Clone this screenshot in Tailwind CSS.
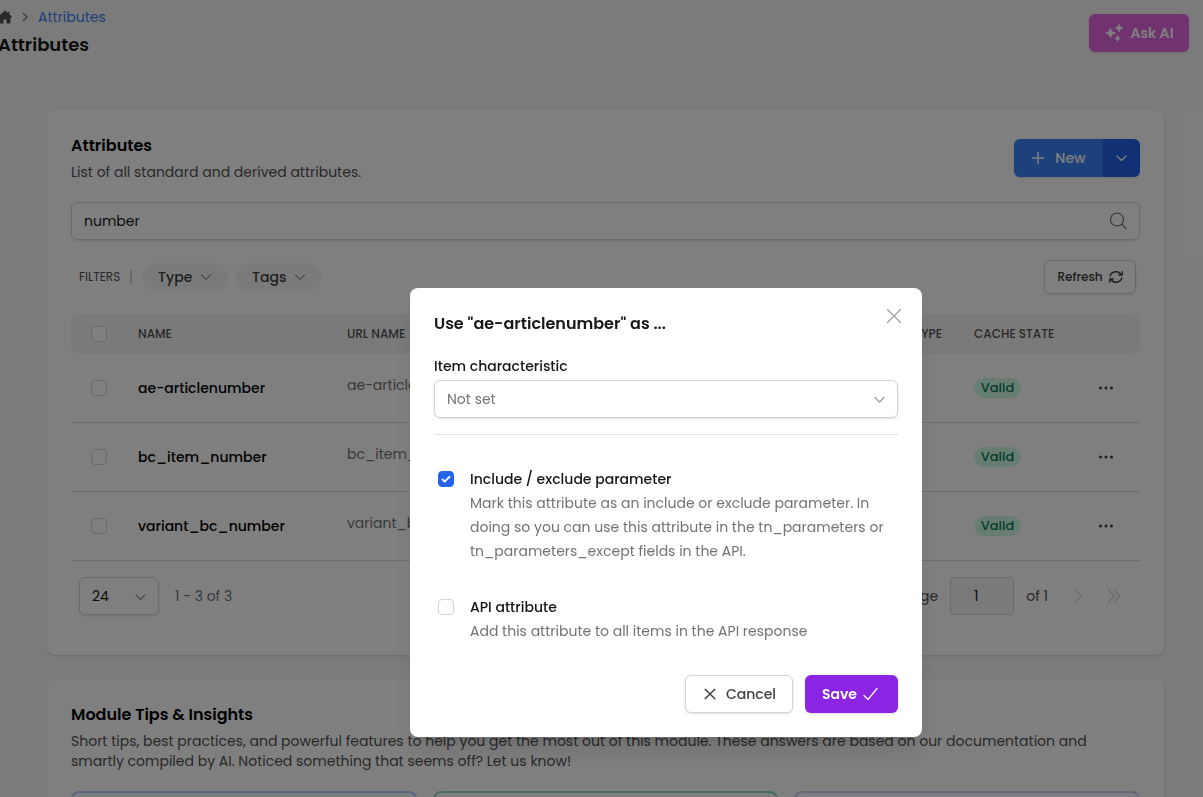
<!DOCTYPE html>
<html lang="en">
<head>
    <meta charset="UTF-8">
    <meta name="viewport" content="width=device-width, initial-scale=1.0">
    <title>Attributes</title>
    <script src="https://cdn.jsdelivr.net/npm/@tailwindcss/browser@4"></script>
</head>
<body class="bg-[#f6f6f6] font-['Poppins','Inter',sans-serif] text-sm text-neutral-900">
    <div class="h-screen overflow-hidden">
        <!-- Page header -->
        <header class="flex items-start justify-between pr-3.5">
            <div class="pt-[7px]">
                <nav class="flex items-center gap-1.5 leading-5">
                    <a href="#" aria-label="Home" class="-ml-0.5 text-neutral-600">
                        <svg class="size-3.5" viewBox="0 0 14 14" fill="currentColor"><path d="M7 .5.3 6.500c-.4.400-.1 1 .4 1H1.500V12.600c0 .5.3.8.8.8H5.500V9.500h3v3.900h3.200c.5 0 .8-.3.8-.8V7.500h.8c.5 0 .8-.6.400-1L11.500 4.500V1.700H9.700v1.200z"/></svg>
                    </a>
                    <svg class="mx-0.5 size-2.5 text-neutral-500" viewBox="0 0 10 10" fill="none" stroke="currentColor" stroke-width="1.300"><path d="m3 1 4 4-4 4"/></svg>
                    <a href="#" class="text-[#3b82f6]">Attributes</a>
                </nav>
                <h1 class="-ml-0.5 mt-1 text-lg leading-7 font-semibold">Attributes</h1>
            </div>
            <button class="mt-3.5 flex h-[38px] w-[100px] items-center justify-center gap-1.5 rounded-md bg-[#e066e0] font-semibold text-white shadow">
                <svg class="size-5" viewBox="0 0 20 20" fill="currentColor"><path d="M6.500 5c.8 3.200 1.800 4.200 5 5-3.200.8-4.200 1.800-5 5-.8-3.200-1.800-4.200-5-5 3.200-.8 4.200-1.800 5-5zM15 1c.6 2.600 1.400 3.400 4 4-2.600.6-3.400 1.400-4 4-.6-2.600-1.400-3.400-4-4 2.600-.6 3.400-1.400 4-4zM13.500 12.500c.4 1.900 1.100 2.600 3 3-1.900.4-2.600 1.100-3 3-.4-1.900-1.100-2.600-3-3 1.900-.4 2.600-1.100 3-3z" stroke="currentColor" stroke-width=".8" stroke-linejoin="round"/></svg>
                Ask AI
            </button>
        </header>

        <div class="mt-[51px] flex items-start gap-5 pl-[47px]">
            <main class="min-w-0 flex-1 space-y-6">
                <!-- Attribute list -->
                <section class="rounded-lg bg-white px-6 pt-6 pb-10 shadow-sm">
                    <div class="flex items-center justify-between">
                        <div>
                            <h2 class="text-base leading-6 font-semibold text-black">Attributes</h2>
                            <p class="mt-1 leading-5 text-neutral-600">List of all standard and derived attributes.</p>
                        </div>
                        <div class="flex h-[38px] rounded-md shadow">
                            <button class="flex w-[89px] items-center justify-center gap-2.5 rounded-l-md bg-[#3b82f6] font-medium text-white">
                                <svg class="size-3.5" viewBox="0 0 14 14" fill="none" stroke="currentColor" stroke-width="1.500"><path d="M7 1v12M1 7h12"/></svg>
                                New
                            </button>
                            <button aria-label="More options" class="flex w-[37px] items-center justify-center rounded-r-md bg-[#2563eb] text-white">
                                <svg class="size-3" viewBox="0 0 12 12" fill="none" stroke="currentColor" stroke-width="1.300" stroke-linecap="round" stroke-linejoin="round"><path d="m1 4 4.500 4.500L10 4"/></svg>
                            </button>
                        </div>
                    </div>

                    <div class="relative mt-5">
                        <input type="text" value="number" aria-label="Search attributes" class="block h-[38px] w-full rounded-md border border-neutral-300 pr-10 pl-3 text-neutral-900 shadow-sm outline-none">
                        <svg class="absolute top-2.5 right-3 size-[18px] text-neutral-500" viewBox="0 0 18 18" fill="none" stroke="currentColor" stroke-width="1.200" stroke-linecap="round"><circle cx="7" cy="7.500" r="6.500"/><path d="m11.800 12.300 4.200 4.200"/></svg>
                    </div>

                    <!-- Filters -->
                    <div class="mt-5 flex items-center pr-1 pl-2">
                        <span class="text-xs text-neutral-600">FILTERS</span>
                        <span class="mx-2.5 h-3.5 w-0.5 bg-neutral-300"></span>
                        <button class="flex h-7 w-[86px] items-center justify-center gap-2 rounded-full bg-neutral-100 font-medium text-neutral-700">
                            Type
                            <svg class="size-3 text-neutral-400" viewBox="0 0 12 12" fill="none" stroke="currentColor" stroke-width="1.300" stroke-linecap="round" stroke-linejoin="round"><path d="m1.500 4 4.500 4.500L10.500 4"/></svg>
                        </button>
                        <button class="ml-2 flex h-7 w-[86px] items-center justify-center gap-2 rounded-full bg-neutral-100 font-medium text-neutral-700">
                            Tags
                            <svg class="size-3 text-neutral-400" viewBox="0 0 12 12" fill="none" stroke="currentColor" stroke-width="1.300" stroke-linecap="round" stroke-linejoin="round"><path d="m1.500 4 4.500 4.500L10.500 4"/></svg>
                        </button>
                        <button class="ml-auto flex h-[34px] w-[92px] items-center justify-center gap-1.5 rounded-md border border-neutral-300 text-xs font-medium text-neutral-700 shadow-sm">
                            Refresh
                            <svg class="size-3.5" viewBox="0 0 14 14" fill="none" stroke="currentColor" stroke-width="1.400" stroke-linecap="round" stroke-linejoin="round"><path d="M1.200 6A6 6 0 0 1 12 4.500M13.200 1.700v3.300H9.900M12.800 8A6 6 0 0 1 2 9.500M.8 12.300V9h3.300"/></svg>
                        </button>
                    </div>

                    <table class="mt-5 w-full table-fixed border-separate border-spacing-0 text-left">
                        <colgroup>
                            <col class="w-[51px]">
                            <col class="w-[209px]">
                            <col>
                            <col class="w-[103px]">
                            <col class="w-[116px]">
                            <col class="w-[66px]">
                        </colgroup>
                        <thead>
                            <tr class="h-10 text-xs text-neutral-600 [&>th]:bg-neutral-100 [&>th]:font-medium">
                                <th class="rounded-l-lg pl-5"><input type="checkbox" aria-label="Select all" class="block size-4 appearance-none rounded border border-neutral-300 bg-white"></th>
                                <th class="px-4">NAME</th>
                                <th class="px-4">URL NAME</th>
                                <th class="px-4 text-right whitespace-nowrap">DATA TYPE</th>
                                <th class="px-4 whitespace-nowrap">CACHE STATE</th>
                                <th class="rounded-r-lg"></th>
                            </tr>
                        </thead>
                        <tbody id="rows"></tbody>
                    </table>

                    <!-- Pagination -->
                    <div class="mt-4 flex items-center pr-4 pl-2 text-neutral-600">
                        <div class="relative">
                            <select aria-label="Rows per page" class="block h-[38px] w-20 appearance-none rounded-md border border-neutral-300 bg-white px-3 text-neutral-900 shadow-sm">
                                <option>24</option>
                                <option>48</option>
                            </select>
                            <svg class="pointer-events-none absolute top-3.5 right-3 size-3 text-neutral-400" viewBox="0 0 12 12" fill="none" stroke="currentColor" stroke-width="1.300" stroke-linecap="round" stroke-linejoin="round"><path d="m1 4 4.500 4.500L10 4"/></svg>
                        </div>
                        <span class="ml-4 text-neutral-500">1 - 3 of 3</span>
                        <label for="page" class="ml-auto">Page</label>
                        <input id="page" type="text" value="1" class="mx-3 h-[38px] w-16 rounded border border-neutral-300 bg-neutral-100 pr-3 text-center text-neutral-900">
                        <span class="whitespace-nowrap">of 1</span>
                        <button aria-label="Next page" class="ml-5 flex w-5 justify-center text-neutral-300">
                            <svg class="size-4" viewBox="0 0 16 16" fill="none" stroke="currentColor" stroke-width="1.200"><path d="m4.500 1.500 7 6.500-7 6.500"/></svg>
                        </button>
                        <button aria-label="Last page" class="ml-4 flex w-5 justify-center text-neutral-300">
                            <svg class="size-4" viewBox="0 0 16 16" fill="none" stroke="currentColor" stroke-width="1.200"><path d="m2 1.500 6.500 6.500L2 14.500M7.500 1.500 14 8l-6.500 6.500"/></svg>
                        </button>
                    </div>
                </section>

                <!-- Tips -->
                <section class="rounded-lg bg-white p-6 shadow-sm">
                    <h2 class="text-base leading-6 font-semibold text-black">Module Tips &amp; Insights</h2>
                    <p class="mt-1 max-w-5xl leading-5 text-neutral-600">Short tips, best practices, and powerful features to help you get the most out of this module. These answers are based on our documentation and smartly compiled by AI. Noticed something that seems off? Let us know!</p>
                    <div class="mt-5 grid grid-cols-3 gap-4">
                        <div class="h-40 rounded-lg border-2 border-[#b4cdf8] bg-[#f7faff]"></div>
                        <div class="h-40 rounded-lg border-2 border-[#94dcbc] bg-[#f9fffc]"></div>
                        <div class="h-40 rounded-lg border-2 border-[#d9ccf3] bg-[#fcfaff]"></div>
                    </div>
                </section>
            </main>
            <aside class="h-[152px] w-[19px] rounded-l-lg bg-[#fbfbfb]"></aside>
        </div>
    </div>

    <!-- Modal -->
    <div class="fixed inset-0 flex items-start justify-center bg-black/50 pt-72 pl-[129px]">
        <form role="dialog" aria-labelledby="modal-title" class="relative w-full max-w-lg rounded-lg bg-white p-6 shadow-xl">
            <h3 id="modal-title" class="text-base leading-6 font-semibold">Use "ae-articlenumber" as ...</h3>
            <button type="button" aria-label="Close" class="absolute top-5 right-5 text-neutral-400">
                <svg class="size-4" viewBox="0 0 16 16" fill="none" stroke="currentColor" stroke-width="1.400" stroke-linecap="round"><path d="m1.500 1.500 13 13M14.500 1.500l-13 13"/></svg>
            </button>

            <label for="characteristic" class="mt-5 block leading-5 font-medium">Item characteristic</label>
            <div class="relative mt-1">
                <select id="characteristic" class="block h-[38px] w-full appearance-none rounded-md border border-neutral-300 bg-white px-3 text-neutral-500 shadow-sm">
                    <option>Not set</option>
                </select>
                <svg class="pointer-events-none absolute top-3.5 right-3 size-3 text-neutral-400" viewBox="0 0 12 12" fill="none" stroke="currentColor" stroke-width="1.400" stroke-linecap="round" stroke-linejoin="round"><path d="m1 3.500 4.500 4.500L10 3.500"/></svg>
            </div>
            <hr class="mt-4 border-neutral-200">

            <div class="mt-8 flex gap-4 pl-1 leading-6">
                <div class="relative mt-1 size-4 flex-none">
                    <input id="include" type="checkbox" checked class="block size-4 appearance-none rounded border border-neutral-300 checked:border-[#2563eb] checked:bg-[#2563eb]">
                    <svg class="pointer-events-none absolute inset-0 size-4 text-white" viewBox="0 0 16 16" fill="none" stroke="currentColor" stroke-width="1.900" stroke-linecap="round" stroke-linejoin="round"><path d="m4.500 8.400 2.200 2.200 4.800-4.800"/></svg>
                </div>
                <div>
                    <label for="include" class="font-medium">Include / exclude parameter</label>
                    <p class="text-neutral-500">Mark this attribute as an include or exclude parameter. In doing so you can use this attribute in the tn_parameters or tn_parameters_except fields in the API.</p>
                </div>
            </div>
            <div class="mt-8 flex gap-4 pl-1 leading-6">
                <input id="api" type="checkbox" class="mt-1 block size-4 flex-none appearance-none rounded border border-neutral-300">
                <div>
                    <label for="api" class="font-medium">API attribute</label>
                    <p class="text-neutral-500">Add this attribute to all items in the API response</p>
                </div>
            </div>

            <div class="mt-8 flex justify-end gap-3">
                <button type="button" class="flex h-[38px] w-[108px] items-center justify-center gap-2.5 rounded-md border border-neutral-300 bg-white pl-0.5 font-medium text-neutral-700 shadow-sm">
                    <svg class="size-3" viewBox="0 0 12 12" fill="none" stroke="currentColor" stroke-width="1.400" stroke-linecap="round"><path d="m1.200 1.200 9.600 9.600M10.800 1.200l-9.600 9.600"/></svg>
                    Cancel
                </button>
                <button type="submit" class="flex h-[38px] w-[93px] items-center justify-center gap-1.5 rounded-md bg-[#8b25e3] pr-0.5 font-semibold text-white shadow-sm">
                    Save
                    <svg class="size-4" viewBox="0 0 16 16" fill="none" stroke="currentColor" stroke-width="1.200" stroke-linecap="round" stroke-linejoin="round"><path d="m1 9.500 4 4L14 2.500"/></svg>
                </button>
            </div>
        </form>
    </div>

    <script>
        const attributes = ['ae-articlenumber', 'bc_item_number', 'variant_bc_number'];

        document.getElementById('rows').innerHTML = attributes.map(name => `
            <tr class="h-[69px] [&>td]:border-b [&>td]:border-[#dcdcdc]">
                <td class="pl-5"><input type="checkbox" aria-label="Select ${name}" class="block size-4 appearance-none rounded border border-neutral-300"></td>
                <td class="px-4 font-medium text-black">${name}</td>
                <td class="px-4 pb-1.5 text-neutral-500">${name}</td>
                <td class="px-4"></td>
                <td class="px-4"><span class="flex h-5 w-[47px] items-center justify-center rounded-full bg-[#d1fae5] text-[13px] font-medium text-[#047857]">Valid</span></td>
                <td>
                    <button aria-label="Actions for ${name}" class="ml-6 block text-neutral-700">
                        <svg class="size-4" viewBox="0 0 16 16" fill="currentColor"><circle cx="2.500" cy="8" r="1.500"/><circle cx="8" cy="8" r="1.500"/><circle cx="13.500" cy="8" r="1.500"/></svg>
                    </button>
                </td>
            </tr>
        `).join('');
    </script>
</body>
</html>
